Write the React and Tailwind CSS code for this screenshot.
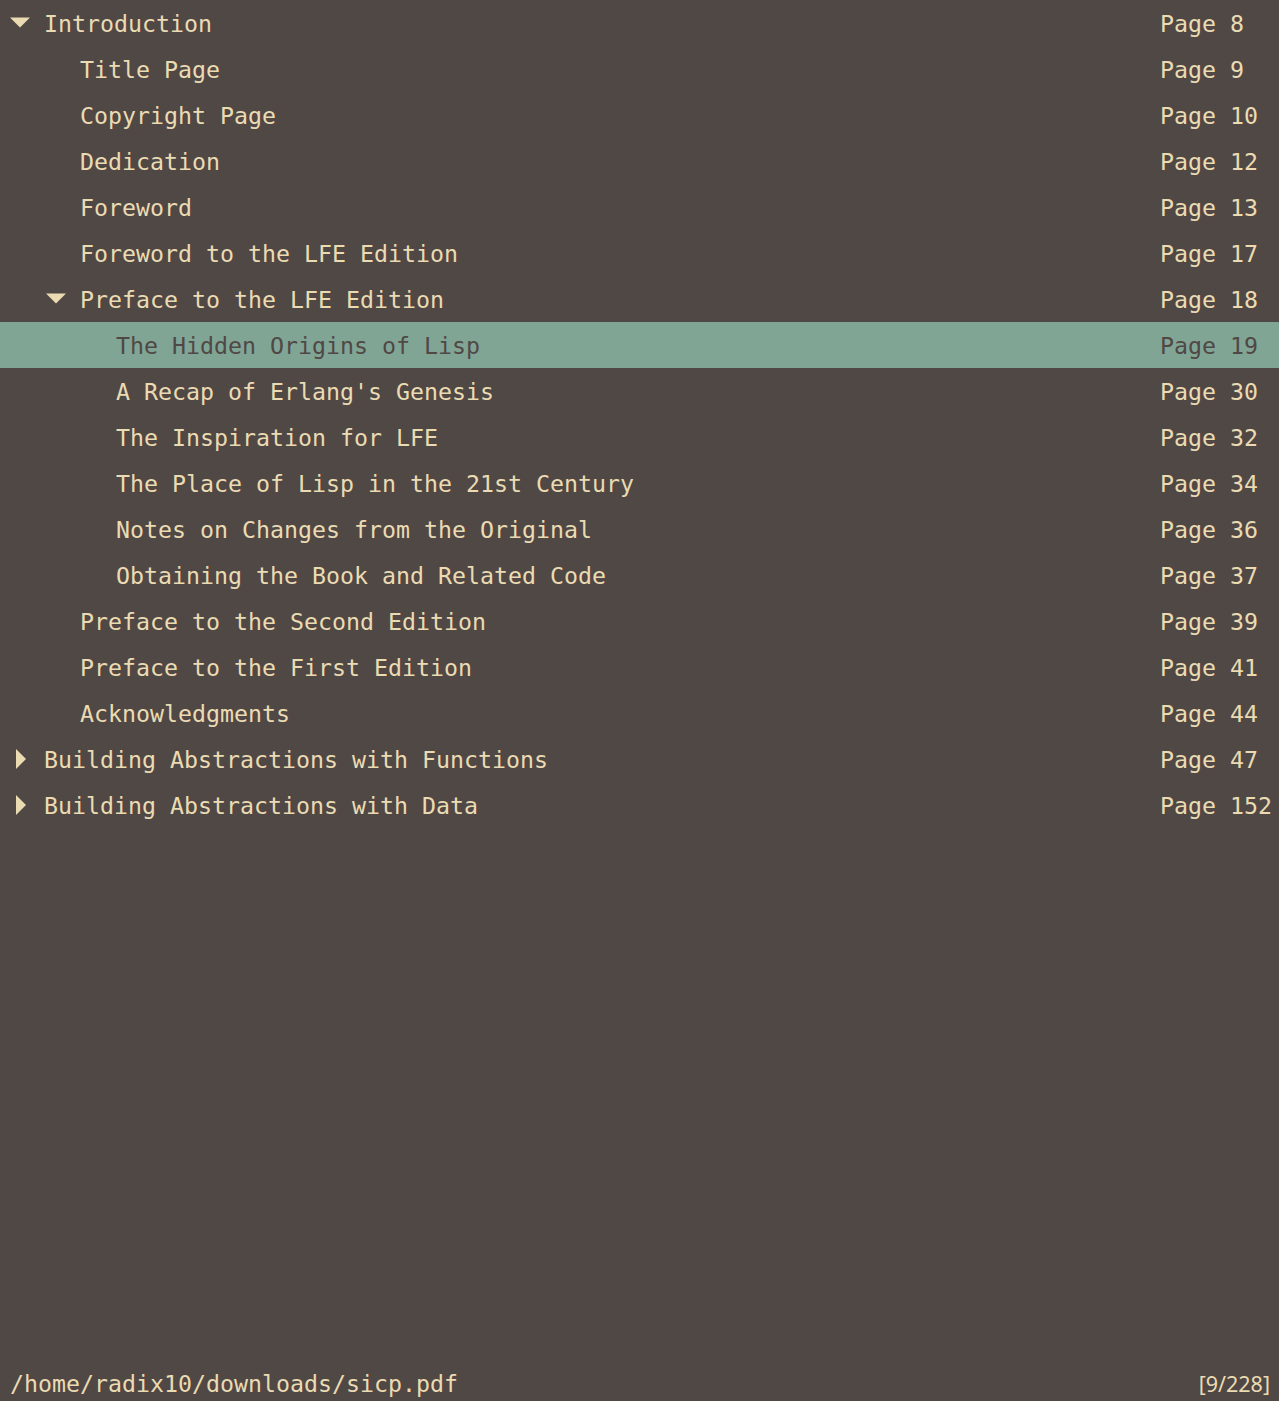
import React from "react";

const rows = [
  { t: "Introduction", p: "8", l: 0, a: "down" },
  { t: "Title Page", p: "9", l: 1 },
  { t: "Copyright Page", p: "10", l: 1 },
  { t: "Dedication", p: "12", l: 1 },
  { t: "Foreword", p: "13", l: 1 },
  { t: "Foreword to the LFE Edition", p: "17", l: 1 },
  { t: "Preface to the LFE Edition", p: "18", l: 1, a: "down" },
  { t: "The Hidden Origins of Lisp", p: "19", l: 2, sel: true },
  { t: "A Recap of Erlang's Genesis", p: "30", l: 2 },
  { t: "The Inspiration for LFE", p: "32", l: 2 },
  { t: "The Place of Lisp in the 21st Century", p: "34", l: 2 },
  { t: "Notes on Changes from the Original", p: "36", l: 2 },
  { t: "Obtaining the Book and Related Code", p: "37", l: 2 },
  { t: "Preface to the Second Edition", p: "39", l: 1 },
  { t: "Preface to the First Edition", p: "41", l: 1 },
  { t: "Acknowledgments", p: "44", l: 1 },
  { t: "Building Abstractions with Functions", p: "47", l: 0, a: "right" },
  { t: "Building Abstractions with Data", p: "152", l: 0, a: "right" },
];

const padClass = ["pl-0", "pl-[36px]", "pl-[72px]"];

function Arrow({ a }) {
  if (a === "down") {
    return (
      <svg width="44" height="46" viewBox="0 0 44 46" className="shrink-0">
        <polygon points="10,17.5 30,17.5 20,27.5" fill="#ebdbb2" />
      </svg>
    );
  }
  if (a === "right") {
    return (
      <svg width="44" height="46" viewBox="0 0 44 46" className="shrink-0">
        <polygon points="16,13 26,23 16,33" fill="#ebdbb2" />
      </svg>
    );
  }
  return <div className="w-[44px] shrink-0" />;
}

export default function App() {
  return (
    <div
      className="h-[1401px] w-full bg-[#504845] flex flex-col text-[#ebdbb2] overflow-hidden"
      style={{ fontFamily: "'DejaVu Sans Mono', monospace" }}
    >
      <div className="flex flex-col">
        {rows.map((r, i) => (
          <div
            key={i}
            className={
              "h-[46px] flex items-center text-[23.25px] whitespace-pre " +
              (r.sel ? "bg-[#81a595] text-[#504845]" : "")
            }
          >
            <div className={"flex-1 flex items-center " + padClass[r.l]}>
              <Arrow a={r.a} />
              <span className="pt-[2px]">{r.t}</span>
            </div>
            <div className="w-[119px] shrink-0 pt-[2px]">{"Page " + r.p}</div>
          </div>
        ))}
      </div>
      <div className="flex-1" />
      <div className="h-[34px] flex items-center justify-between pl-[10px] pr-[9px]">
        <span className="text-[23.25px]">/home/radix10/downloads/sicp.pdf</span>
        <span
          className="text-[21.5px]"
          style={{ fontFamily: "'Noto Sans', sans-serif" }}
        >
          [9/228]
        </span>
      </div>
    </div>
  );
}
